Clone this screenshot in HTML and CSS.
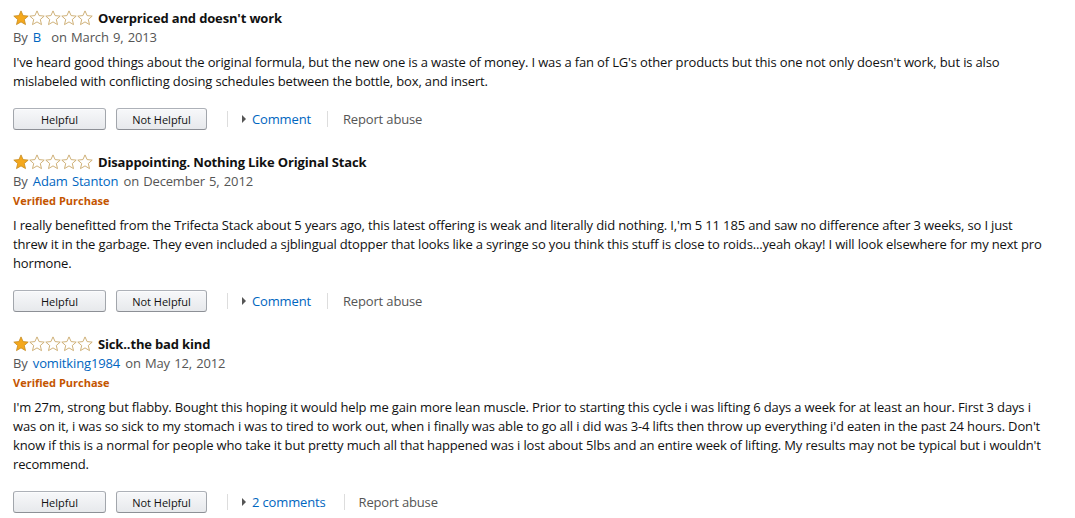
FILE: index.html
```html
<!DOCTYPE html>
<html>
<head>
<meta charset="utf-8">
<link rel="stylesheet" href="styles.css">
</head>
<body>
<svg width="0" height="0" class="defs">
  <defs>
    <symbol id="star-full" viewBox="0 0 16 16">
      <path d="M8 0.9 L10.1 5.6 L15.2 6.1 L11.3 9.5 L12.5 14.6 L8 11.9 L3.5 14.6 L4.7 9.5 L0.8 6.1 L5.9 5.6 Z" fill="#f4a81d" stroke="#c58a1f" stroke-width="0.8" stroke-linejoin="round"/>
    </symbol>
    <symbol id="star-empty" viewBox="0 0 16 16">
      <path d="M8 0.9 L10.1 5.6 L15.2 6.1 L11.3 9.5 L12.5 14.6 L8 11.9 L3.5 14.6 L4.7 9.5 L0.8 6.1 L5.9 5.6 Z" fill="#fff" stroke="#c9a86a" stroke-width="0.9" stroke-linejoin="round"/>
    </symbol>
  </defs>
</svg>

<div class="review">
  <div class="title-row">
    <span class="stars"><svg><use href="#star-full"/></svg><svg><use href="#star-empty"/></svg><svg><use href="#star-empty"/></svg><svg><use href="#star-empty"/></svg><svg><use href="#star-empty"/></svg></span>
    <span class="title">Overpriced and doesn't work</span>
  </div>
  <div class="byline">By <a class="author author-short">B</a> on March 9, 2013</div>
  <p class="body">I've heard good things about the original formula, but the new one is a waste of money. I was a fan of LG's other products but this one not only doesn't work, but is also mislabeled with conflicting dosing schedules between the bottle, box, and insert.</p>
  <div class="actions">
    <button class="btn">Helpful</button>
    <button class="btn">Not Helpful</button>
    <span class="sep"></span>
    <span class="tri"></span><a class="link">Comment</a>
    <span class="sep sep2"></span>
    <span class="report">Report abuse</span>
  </div>
</div>

<div class="review">
  <div class="title-row">
    <span class="stars"><svg><use href="#star-full"/></svg><svg><use href="#star-empty"/></svg><svg><use href="#star-empty"/></svg><svg><use href="#star-empty"/></svg><svg><use href="#star-empty"/></svg></span>
    <span class="title">Disappointing. Nothing Like Original Stack</span>
  </div>
  <div class="byline">By <a class="author">Adam Stanton</a> on December 5, 2012</div>
  <div class="verified">Verified Purchase</div>
  <p class="body">I really benefitted from the Trifecta Stack about 5 years ago, this latest offering is weak and literally did nothing. I,'m 5 11 185 and saw no difference after 3 weeks, so I just threw it in the garbage. They even included a sjblingual dtopper that looks like a syringe so you think this stuff is close to roids...yeah okay! I will look elsewhere for my next pro hormone.</p>
  <div class="actions">
    <button class="btn">Helpful</button>
    <button class="btn">Not Helpful</button>
    <span class="sep"></span>
    <span class="tri"></span><a class="link">Comment</a>
    <span class="sep sep2"></span>
    <span class="report">Report abuse</span>
  </div>
</div>

<div class="review">
  <div class="title-row">
    <span class="stars"><svg><use href="#star-full"/></svg><svg><use href="#star-empty"/></svg><svg><use href="#star-empty"/></svg><svg><use href="#star-empty"/></svg><svg><use href="#star-empty"/></svg></span>
    <span class="title">Sick..the bad kind</span>
  </div>
  <div class="byline">By <a class="author">vomitking1984</a> on May 12, 2012</div>
  <div class="verified">Verified Purchase</div>
  <p class="body">I'm 27m, strong but flabby. Bought this hoping it would help me gain more lean muscle. Prior to starting this cycle i was lifting 6 days a week for at least an hour. First 3 days i was on it, i was so sick to my stomach i was to tired to work out, when i finally was able to go all i did was 3-4 lifts then throw up everything i'd eaten in the past 24 hours. Don't know if this is a normal for people who take it but pretty much all that happened was i lost about 5lbs and an entire week of lifting. My results may not be typical but i wouldn't recommend.</p>
  <div class="actions">
    <button class="btn">Helpful</button>
    <button class="btn">Not Helpful</button>
    <span class="sep"></span>
    <span class="tri"></span><a class="link">2 comments</a>
    <span class="sep sep2 sep3"></span>
    <span class="report">Report abuse</span>
  </div>
</div>
</body>
</html>
```

FILE: styles.css
```css
html, body {
  margin: 0;
  padding: 0;
  background: #fff;
}
body {
  font-family: "Open Sans", "Noto Sans", sans-serif;
  font-size: 13px;
  letter-spacing: -0.15px;
  color: #111;
  padding: 8px 13px 0 13px;
}
.defs {
  position: absolute;
  width: 0;
  height: 0;
}
.review {
  width: 1032px;
  margin-bottom: 21px;
}
.title-row {
  display: flex;
  align-items: center;
  height: 19px;
}
.stars {
  display: flex;
  width: 80px;
  margin-right: 5px;
}
.stars svg {
  width: 16px;
  height: 16px;
}
.title {
  font-weight: bold;
  font-size: 13px;
  color: #111;
}
.byline {
  color: #555;
  line-height: 19px;
  margin-top: 1px;
  word-spacing: 1px;
}
.author {
  color: #0066c0;
  margin: 0 1px;
}
.author-short {
  margin-right: 6px;
}
.verified {
  color: #c45500;
  font-weight: bold;
  font-size: 11px;
  letter-spacing: 0;
  line-height: 19px;
}
.body {
  margin: 6px 0 0 0;
  line-height: 19px;
  color: #111;
}
.actions {
  display: flex;
  align-items: center;
  margin-top: 16px;
  height: 24px;
}
.btn {
  font-family: inherit;
  font-size: 11px;
  letter-spacing: 0;
  color: #111;
  height: 22px;
  width: 93px;
  padding: 0;
  margin-right: 10px;
  border: 1px solid #a2a6ac;
  border-color: #adb1b8 #a2a6ac #8d9096;
  border-radius: 3px;
  background: linear-gradient(to bottom, #f7f8fa, #e7e9ec);
  box-shadow: inset 0 1px 0 rgba(255,255,255,.6);
}
.btn + .btn {
  width: 91px;
}
.sep {
  width: 1px;
  height: 16px;
  background: #ddd;
  margin: 0 11px 0 10px;
}
.sep2 {
  margin: 0 15px 0 16px;
}
.sep3 {
  margin: 0 14px 0 18px;
}
.tri {
  width: 0;
  height: 0;
  border-top: 4px solid transparent;
  border-bottom: 4px solid transparent;
  border-left: 4px solid #555;
  margin-left: 3px;
  margin-right: 6px;
}
.link {
  color: #0066c0;
}
.report {
  color: #555;
}
```
